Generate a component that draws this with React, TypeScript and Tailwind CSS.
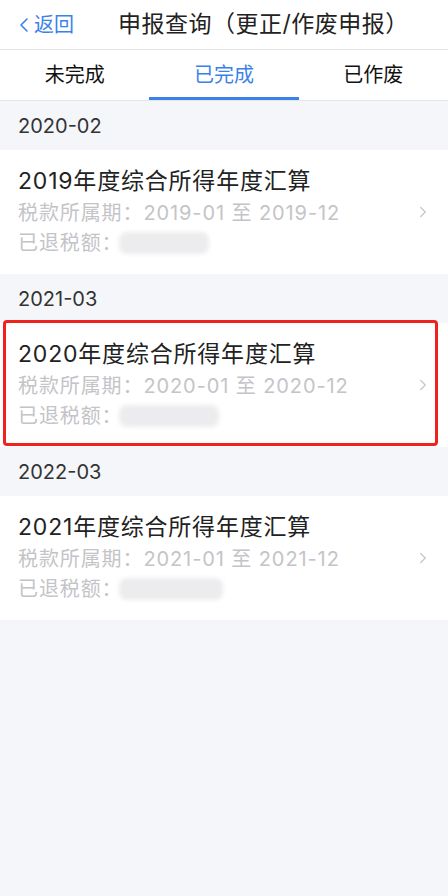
import { ChevronLeft, ChevronRight } from 'lucide-react';

const records = [
  { month: '2020-02', year: '2019', marked: false, blur: 'w-[90px]' },
  { month: '2021-03', year: '2020', marked: true, blur: 'w-[100px]' },
  { month: '2022-03', year: '2021', marked: false, blur: 'w-[104px]' },
];

const tabs = ['未完成', '已完成', '已作废'];

export default function App() {
  return (
    <div
      className="min-h-[896px] w-[448px] bg-[#f5f6fa]"
      style={{ fontFamily: 'Inter, "Noto Sans CJK SC", sans-serif' }}
    >
      <div className="relative flex h-[50px] items-center bg-white border-b border-[#e5e5e5]">
        <div className="flex items-center pl-[12px] text-[20px] text-[#3b82e8]">
          <ChevronLeft size={24} strokeWidth={1.6} className="-mr-[2px]" />
          <span>返回</span>
        </div>
        <div className="ml-[44px] text-[23px] tracking-[0.5px] text-[#222]">申报查询（更正/作废申报）</div>
      </div>

      <div className="grid h-[51px] grid-cols-3 bg-white border-b border-[#e5e5e5]">
        {tabs.map((t, i) => (
          <div key={t} className="relative flex items-center justify-center">
            <span className={i === 1 ? 'text-[20px] text-[#3b82e8]' : 'text-[20px] text-[#111]'}>{t}</span>
            {i === 1 && <div className="absolute bottom-0 left-0 right-0 h-[3px] bg-[#3b82e8]" />}
          </div>
        ))}
      </div>

      {records.map(r => (
        <div key={r.month}>
          <div className="flex h-[49px] items-center px-[18px] text-[20px] text-[#333]">{r.month}</div>
          <div className="relative flex h-[124px] items-center bg-white pl-[18px] pr-[16px]">
            <div className="flex-1">
              <div className="text-[23px] leading-[30px] tracking-[0.8px] text-[#222]">{r.year}年度综合所得年度汇算</div>
              <div className="mt-[2px] text-[20px] leading-[30px] tracking-[0.9px] text-[#c4c4c8]">
                税款所属期：{r.year}-01 至 {r.year}-12
              </div>
              <div className="flex items-center text-[20px] leading-[30px] tracking-[0.9px] text-[#c4c4c8]">
                <span>已退税额：</span>
                <span className={`ml-[-4px] h-[22px] ${r.blur} rounded-[8px] bg-[#ececee] blur-[2px]`} />
              </div>
            </div>
            <ChevronRight size={18} strokeWidth={1.8} className="text-[#c8c8cc]" />
            {r.marked && (
              <div className="pointer-events-none absolute left-[3px] right-[10px] top-[-3px] bottom-[1px] rounded-[4px] border-[3px] border-[#f0221e]" />
            )}
          </div>
        </div>
      ))}
    </div>
  );
}
